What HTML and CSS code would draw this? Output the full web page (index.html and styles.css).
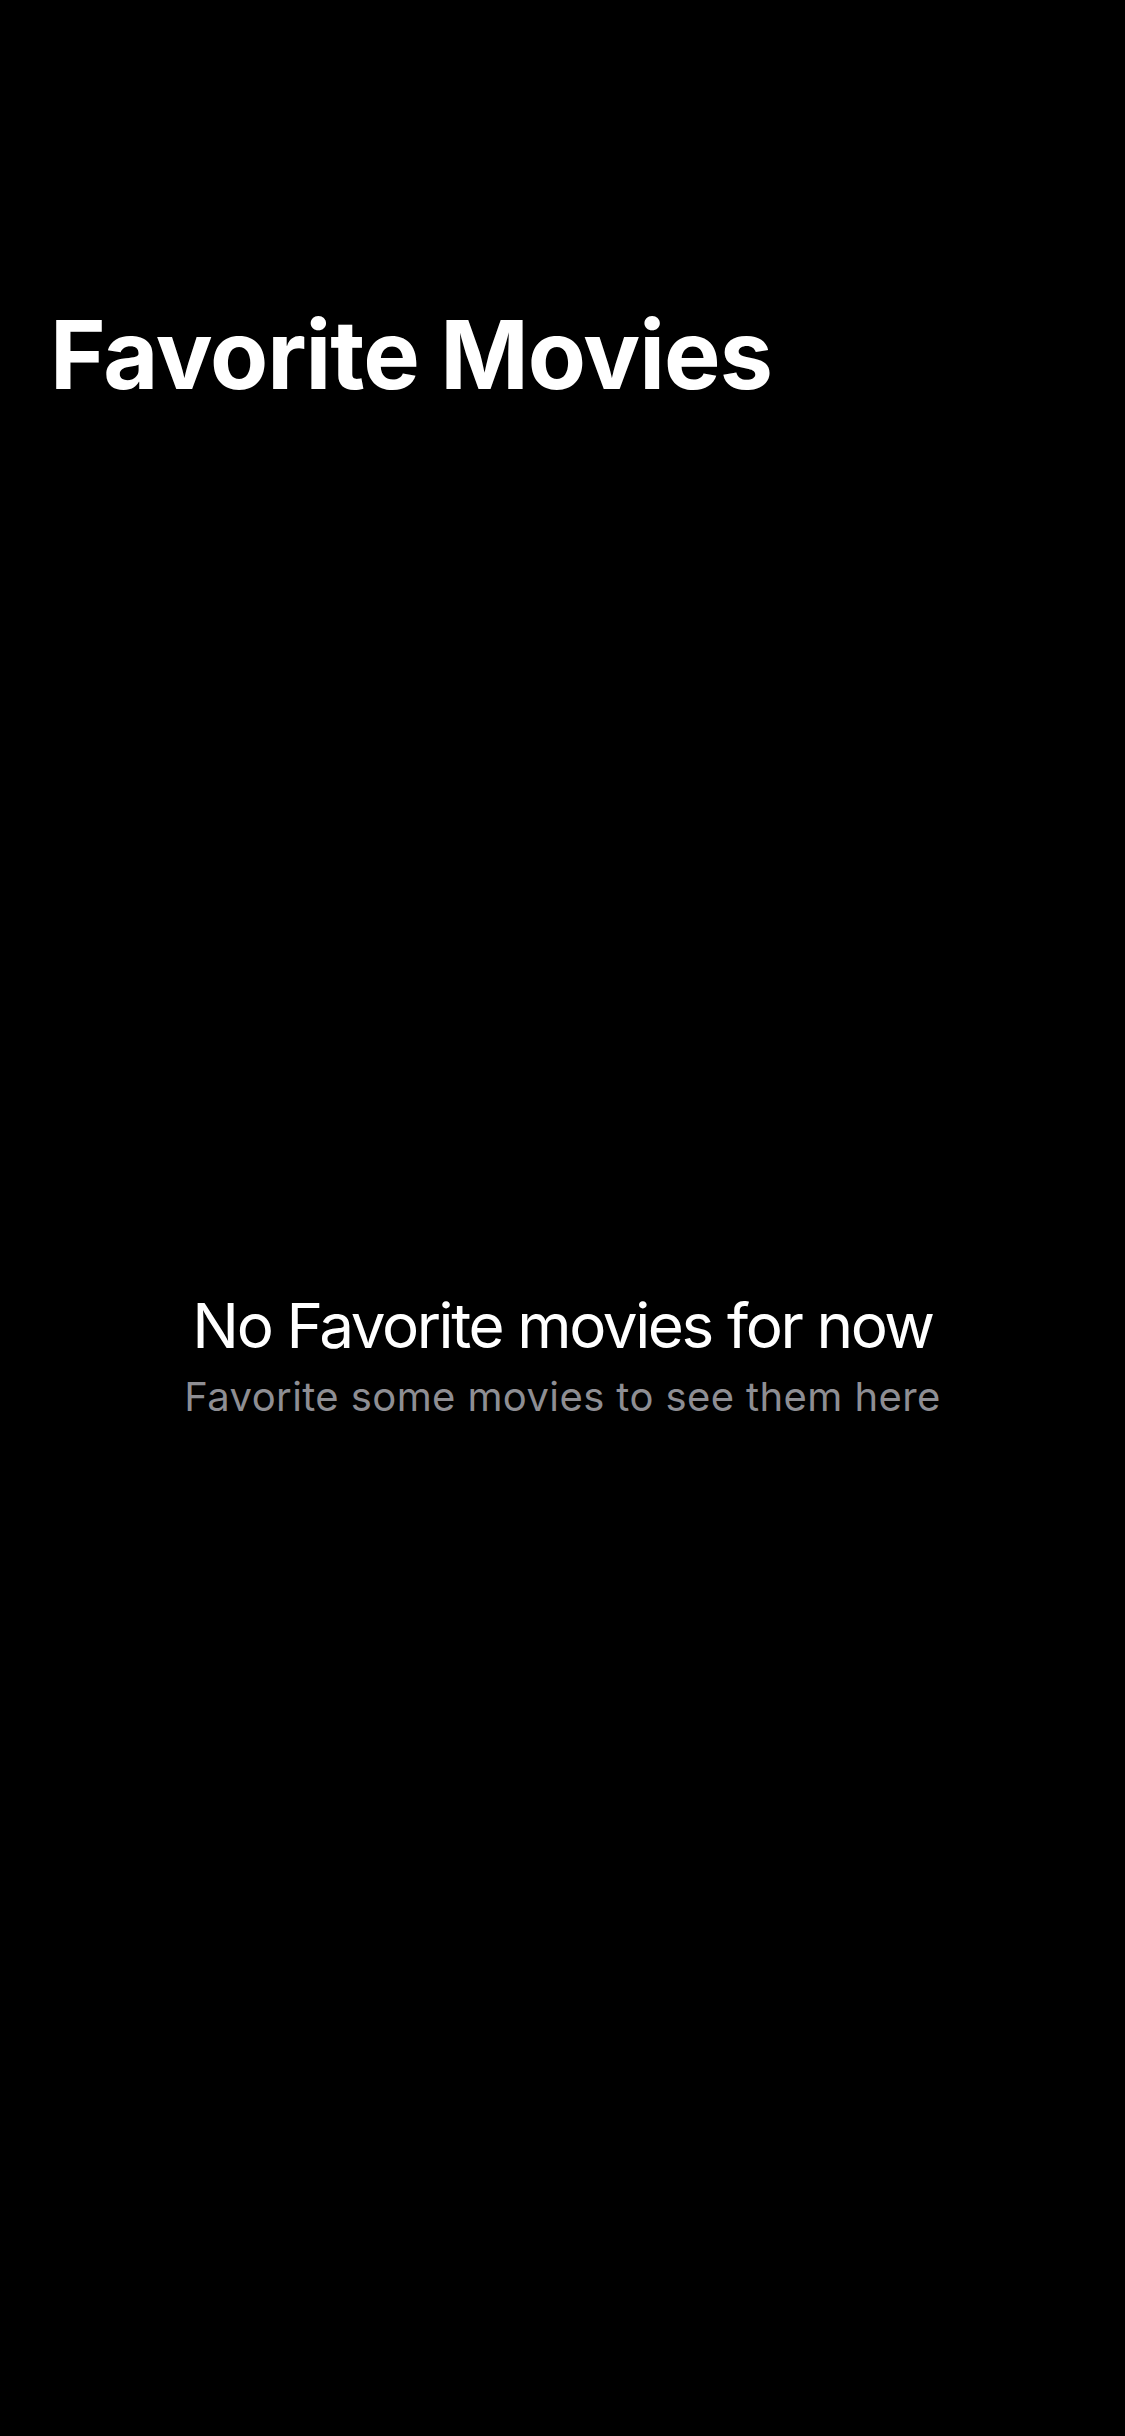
FILE: index.html
```html
<!DOCTYPE html>
<html lang="en">
<head>
<meta charset="utf-8">
<title>Favorite Movies</title>
<link rel="stylesheet" href="styles.css">
</head>
<body>
<div class="screen">
  <header class="header">
    <h1 class="title">Favorite Movies</h1>
  </header>
  <main class="content">
    <div class="empty">
      <p class="empty-title">No Favorite movies for now</p>
      <p class="empty-sub">Favorite some movies to see them here</p>
    </div>
  </main>
</div>
</body>
</html>
```
FILE: styles.css
```css
html, body {
  margin: 0;
  padding: 0;
  background: #000;
}
.screen {
  width: 1125px;
  height: 2436px;
  display: flex;
  flex-direction: column;
  font-family: Inter, "Noto Sans", sans-serif;
  color: #fff;
}
.header {
  padding: 298px 50px 0;
}
.title {
  margin: 0;
  font-size: 95px;
  line-height: 114px;
  font-weight: 700;
  letter-spacing: -1px;
}
.content {
  flex: 1;
  display: flex;
  justify-content: center;
  padding-top: 876px;
}
.empty {
  display: flex;
  flex-direction: column;
  align-items: center;
  gap: 10px;
}
.empty-title {
  margin: 0;
  font-size: 62px;
  line-height: 75px;
  font-weight: 400;
  letter-spacing: -2.4px;
  color: #fff;
}
.empty-sub {
  margin: 0;
  font-size: 40px;
  line-height: 48px;
  font-weight: 400;
  letter-spacing: 0.4px;
  color: #8e8e93;
}
```
